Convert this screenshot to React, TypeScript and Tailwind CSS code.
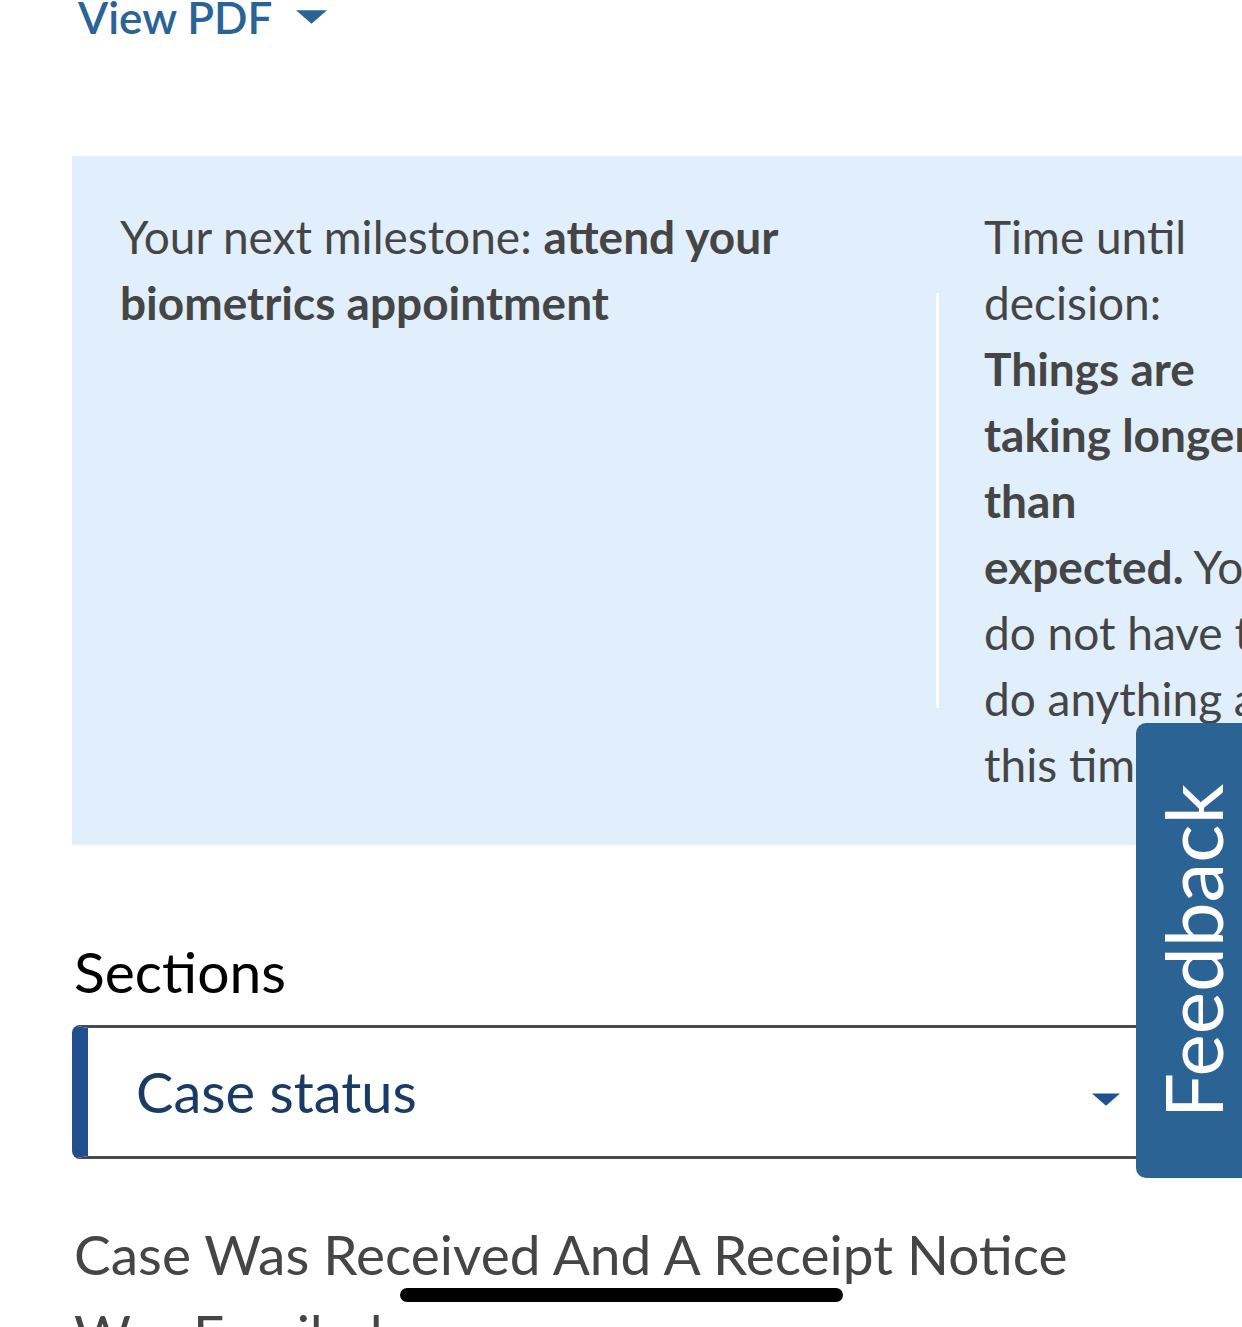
import React from 'react';

const Caret = ({ className }: { className: string }) => (
  <svg viewBox="0 0 32 14" className={className} aria-hidden="true">
    <path d="M0 0 L32 0 L16 14 Z" fill="currentColor" />
  </svg>
);

export default function App() {
  return (
    <div className="relative w-[1242px] h-[1327px] overflow-hidden bg-white font-['Lato',sans-serif]">
      <div className="pl-[72px]">
        {/* View PDF link */}
        <div className="-mt-[16px] flex items-center gap-[24px] pl-[6px] text-[#2a6496]">
          <span className="text-[44px] font-semibold leading-[66px]">View PDF</span>
          <Caret className="w-[31px] h-[14px]" />
        </div>

        {/* Milestone box */}
        <div className="mt-[106px] w-[1260px] h-[689px] bg-[#e1effd] flex py-[48px] pl-[48px] leading-[66px] text-[#454545]">
          <div className="w-[768px] shrink-0 text-[46px]">
            Your next milestone: <b className="font-bold">attend your biometrics appointment</b>
          </div>
          <div className="self-center w-[3px] h-[415px] bg-white ml-[48px] shrink-0" />
          <div className="ml-[45px] w-[296px] shrink-0 text-[46px]">
            Time until decision: <b className="font-bold">Things are taking longer than expected.</b> You do not
            have to do anything at this time.
          </div>
        </div>

        {/* Sections */}
        <div className="mt-[96px] text-[57px] leading-[60px] text-black pl-[2px]">Sections</div>
        <div className="mt-[24px] w-[1098px] h-[134px] flex items-center rounded-l-[8px] border-y-[3px] border-[#4a4a4a] border-l-[16px] border-l-[#22508e] bg-white">
          <span className="pl-[48px] text-[56px] leading-[66px] text-[#1b3b66] flex-1">Case status</span>
          <Caret className="w-[28px] h-[15px] text-[#22508e] mr-[50px] mt-[14px]" />
        </div>

        <div className="mt-[55px] text-[55px] leading-[80px] text-[#454545] pl-[2px] w-[1098px]">
          Case Was Received And A Receipt Notice Was Emailed.
        </div>
      </div>

      {/* Feedback tab */}
      <div className="absolute left-[1136px] top-[723px] w-[112px] h-[455px] bg-[#2b6394] rounded-l-[10px] flex items-center justify-center">
        <span className="-rotate-90 whitespace-nowrap text-white text-[80px] leading-none">Feedback</span>
      </div>

      {/* Home indicator */}
      <div className="absolute left-[400px] top-[1288px] w-[443px] h-[14px] bg-black rounded-full" />
    </div>
  );
}
